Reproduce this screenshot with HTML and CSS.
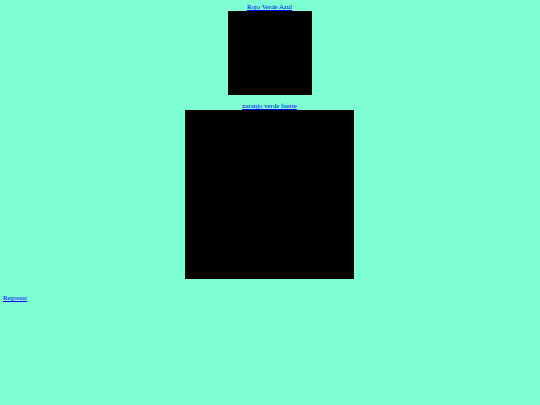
FILE: index.html
```html
<!DOCTYPE html>
<html>
<head>
<meta charset="utf-8">
<title>Colores</title>
<link rel="stylesheet" href="styles.css">
</head>
<body>
<div class="page">
  <div class="group">
    <a class="label" href="#">Rojo Verde Azul</a>
    <div class="box box-small"></div>
  </div>
  <div class="group">
    <a class="label" href="#">naranjo verde fuerte</a>
    <div class="box box-large"></div>
  </div>
  <a class="back" href="#">Regresar</a>
</div>
</body>
</html>
```
FILE: styles.css
```css
html, body {
  margin: 0;
  padding: 0;
  background: #7fffd4;
}
body {
  font-family: "Liberation Serif", "Times New Roman", serif;
  font-size: 6.8px;
  line-height: 8px;
}
.page {
  display: flex;
  flex-direction: column;
  padding: 3px 1px 0 0;
}
.group {
  display: flex;
  flex-direction: column;
  align-items: center;
  margin-bottom: 7px;
}
.label {
  color: #0000ee;
  text-decoration: underline;
}
.box {
  background: #000;
}
.box-small {
  width: 84px;
  height: 84px;
}
.box-large {
  width: 169px;
  height: 169px;
}
.back {
  color: #0000ee;
  text-decoration: underline;
  align-self: flex-start;
  margin-left: 3px;
  margin-top: 8px;
}
```
